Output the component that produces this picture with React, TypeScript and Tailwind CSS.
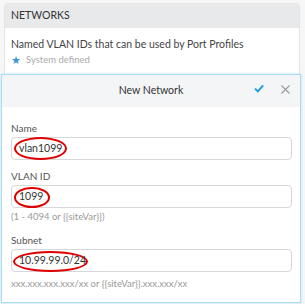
import React from "react";

type FieldProps = {
  label: string;
  value: string;
  ring: string;
  help?: string;
  top: string;
  helpGap?: string;
};

const Field = ({ label, value, ring, help, top, helpGap }: FieldProps) => {
  return (
    <div className={`flex flex-col ${top}`}>
      <span className="h-[14px] text-[10px] text-[#555] leading-[14px]">{label}</span>
      <div className="relative mt-[2px] h-[23px] w-[281px] rounded-[4px] border border-[#d5d7da] bg-white px-[7px] flex items-center">
        <span className="text-[10.5px] text-[#333] relative z-10">{value}</span>
        <span className={`absolute rounded-[50%] border-[2px] border-[#e00000] ${ring}`} />
      </div>
      {help && <span className={`h-[14px] leading-[14px] text-[9.5px] text-[#9a9a9a] ${helpGap}`}>{help}</span>}
    </div>
  );
};

const App = () => {
  return (
    <div className="w-[305px] h-[304px] bg-[#f7f7f7] pt-[4px] font-['Lato',sans-serif] overflow-hidden">
      <div className="ml-[5px] w-[294px] bg-white rounded-t-[3px] shadow-[0_0_2px_rgba(0,0,0,0.25)]">
        <div className="h-[24px] bg-[#e8e9eb] px-[6px] flex items-center rounded-t-[3px]">
          <span className="text-[10.5px] text-[#333]">NETWORKS</span>
        </div>
        <div className="px-[6px] pt-[8px] pb-[7px]">
          <div className="h-[16px] text-[10.5px] text-[#444] leading-4">Named VLAN IDs that can be used by Port Profiles</div>
          <div className="h-[14px] mt-[1px] flex items-center gap-[5px]">
            <span className="text-[11px] text-[#3a9ad9] leading-3">★</span>
            <span className="text-[9.5px] text-[#aaa]">System defined</span>
          </div>
        </div>
      </div>
      <div className="ml-[1px] w-[300px] bg-white border border-[#a8dcf2] shadow-[0_0_3px_rgba(90,180,230,0.35)]">
        <div className="h-[32px] bg-[#f4f5f7] relative flex items-center justify-center">
          <span className="text-[10.5px] text-[#333]">New Network</span>
          <svg className="absolute left-[252px] top-[9px]" width="10" height="9" viewBox="0 0 10 9">
            <path d="M1 4.6 L3.8 7.4 L9.2 1.4" fill="none" stroke="#1e9ce6" strokeWidth="2" />
          </svg>
          <svg className="absolute left-[279px] top-[10px]" width="9" height="9" viewBox="0 0 9 9">
            <path d="M0.5 0.5 L8.5 8.5 M8.5 0.5 L0.5 8.5" fill="none" stroke="#9a9a9a" strokeWidth="1.1" />
          </svg>
        </div>
        <div className="pl-[9px] pt-[14px] pb-[11px] flex flex-col">
          <Field label="Name" value="vlan1099" top="" ring="left-[2px] top-[-1px] w-[53px] h-[23px]" />
          <Field
            label="VLAN ID"
            value="1099"
            top="mt-[9px]"
            ring="left-[2px] top-[1px] w-[36px] h-[21px]"
            help="(1 - 4094 or {{siteVar}})"
            helpGap="mt-[2px]"
          />
          <Field
            label="Subnet"
            value="10.99.99.0/24"
            top="mt-[9px]"
            ring="left-[1px] top-[1px] w-[75px] h-[21px]"
            help="xxx.xxx.xxx.xxx/xx or {{siteVar}}.xxx.xxx/xx"
            helpGap="mt-[5px]"
          />
        </div>
      </div>
    </div>
  );
};

export default App;
